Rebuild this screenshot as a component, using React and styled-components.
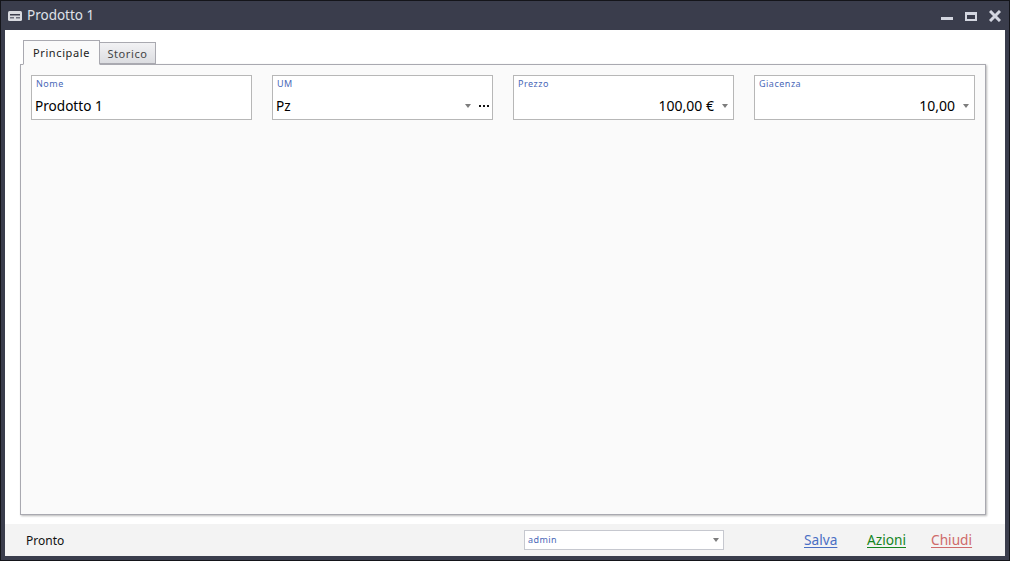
import React from "react";
import styled, { createGlobalStyle } from "styled-components";

const GlobalStyle = createGlobalStyle`
  html, body {
    margin: 0;
    padding: 0;
    background: #000;
  }
  body {
    font-family: "Noto Sans", "Open Sans", sans-serif;
  }
`;

const Win = styled.div`
  width: 1010px;
  height: 561px;
  box-sizing: border-box;
  display: flex;
  flex-direction: column;
  background: #3a3d4c;
  border: 1px solid #14151a;
  padding: 0 4px 4px 4px;
  overflow: hidden;
`;

const TitleBar = styled.div`
  height: 29px;
  flex: none;
  display: flex;
  align-items: center;
  color: #dfe1e8;
  font-size: 13.5px;
  padding-left: 3px;
`;

const TitleText = styled.span`
  margin-left: 5px;
  margin-top: -2px;
  flex: 1;
`;

const WinButtons = styled.div`
  display: flex;
  align-items: center;
  gap: 12px;
  margin-right: 4px;
  svg {
    display: block;
  }
`;

const Body = styled.div`
  flex: 1;
  min-height: 0;
  background: #fff;
  padding: 9px 19px 9px 15px;
  display: flex;
  flex-direction: column;
`;

const TabRow = styled.div`
  height: 25px;
  flex: none;
  display: flex;
  align-items: flex-end;
  padding-left: 3px;
  position: relative;
  z-index: 1;
`;

const Tab = styled.div`
  box-sizing: border-box;
  height: ${(p) => (p.$active ? 25 : 22)}px;
  width: ${(p) => p.$width}px;
  display: flex;
  align-items: center;
  justify-content: center;
  font-size: 11px;
  letter-spacing: 0.6px;
  color: ${(p) => (p.$active ? "#222" : "#444")};
  border: 1px solid #a9a9b0;
  border-left-width: ${(p) => (p.$active ? 1 : 0)}px;
  border-bottom: ${(p) => (p.$active ? "1px solid #fafafa" : "1px solid #a9a9b0")};
  margin-bottom: ${(p) => (p.$active ? -1 : 0)}px;
  background: ${(p) =>
    p.$active ? "#fafafa" : "linear-gradient(#f2f2f4, #dcdde1)"};
`;

const Panel = styled.div`
  flex: 1;
  min-height: 0;
  box-sizing: border-box;
  background: #fafafa;
  border: 1px solid #a9a9b0;
  box-shadow: 1px 1px 2px #b8b8b8;
  padding: 10px 10px;
  display: grid;
  grid-template-columns: repeat(4, 221px);
  justify-content: space-between;
  align-content: start;
`;

const Field = styled.div`
  box-sizing: border-box;
  height: 45px;
  background: #fff;
  border: 1px solid #b7b7b7;
  padding: 1px 2px 0 3px;
  display: flex;
  flex-direction: column;
`;

const Label = styled.div`
  font-size: 9px;
  line-height: 13px;
  height: 13px;
  margin-left: 1px;
  color: #4a68b8;
  letter-spacing: 0.5px;
`;

const ValueRow = styled.div`
  flex: 1;
  display: flex;
  align-items: center;
  justify-content: flex-end;
  font-size: 13.6px;
  color: #000;
  margin-top: 1px;
`;

const Value = styled.span`
  flex: ${(p) => (p.$right ? "none" : 1)};
  font-size: ${(p) => (p.$right ? 14 : 13.6)}px;
  margin-right: ${(p) => (p.$right ? 8 : 0)}px;
`;

const Arrow = styled.span`
  width: 0;
  height: 0;
  flex: none;
  border-left: 3.5px solid transparent;
  border-right: 3.5px solid transparent;
  border-top: 4px solid #7d7d7d;
  margin: ${(p) => p.$margin || "2px 3px 0 0"};
`;

const Dots = styled.span`
  display: flex;
  gap: 2px;
  margin: 2px 1px 0 8px;
  i {
    width: 2px;
    height: 2px;
    background: #111;
    display: block;
  }
`;

const Footer = styled.div`
  height: 32px;
  flex: none;
  background: #f3f3f3;
  display: flex;
  align-items: center;
  padding-left: 21px;
  font-size: 12px;
  color: #111;
`;

const Status = styled.span`
  width: 498px;
  flex: none;
`;

const UserSelect = styled.div`
  box-sizing: border-box;
  width: 200px;
  height: 20px;
  flex: none;
  margin-top: -1px;
  background: #fff;
  border: 1px solid #c6c8cf;
  display: flex;
  align-items: center;
  justify-content: space-between;
  padding: 0 4px 0 3px;
  font-size: 9px;
  letter-spacing: 0.4px;
  color: #4a68b8;
`;

const Actions = styled.div`
  display: grid;
  grid-template-columns: 63px 64px auto;
  margin-left: 80px;
  margin-top: -2px;
`;

const Action = styled.span`
  font-size: 13.7px;
  color: ${(p) => p.$color};
  text-decoration: underline;
  text-underline-offset: 2px;
`;

const fields = [
  { label: "Nome", value: "Prodotto 1" },
  { label: "UM", value: "Pz", combo: true },
  { label: "Prezzo", value: "100,00 €", right: true },
  { label: "Giacenza", value: "10,00", right: true },
];

function App() {
  return (
    <>
      <GlobalStyle />
      <Win>
        <TitleBar>
          <svg width="14" height="10" viewBox="0 0 14 10">
            <rect x="0" y="0" width="14" height="10" rx="1.5" fill="#d8dae0" />
            <rect x="2" y="3" width="10" height="1.5" fill="#3a3d4c" />
            <rect x="2" y="6" width="4" height="1.5" fill="#6b6e7c" />
            <rect x="8" y="6" width="4" height="1.5" fill="#6b6e7c" />
          </svg>
          <TitleText>Prodotto 1</TitleText>
          <WinButtons>
            <svg width="12" height="12" viewBox="0 0 12 12">
              <rect x="0" y="7" width="12" height="3" fill="#d3d6e0" />
            </svg>
            <svg width="12" height="12" viewBox="0 0 12 12">
              <path d="M0 2h12v9H0z M2 5v4h8V5z" fill="#d3d6e0" fillRule="evenodd" />
            </svg>
            <svg width="12" height="12" viewBox="0 0 12 12">
              <path d="M1 1l10 10M11 1L1 11" stroke="#d3d6e0" strokeWidth="3" />
            </svg>
          </WinButtons>
        </TitleBar>
        <Body>
          <TabRow>
            <Tab $active $width={77}>Principale</Tab>
            <Tab $width={56}>Storico</Tab>
          </TabRow>
          <Panel>
            {fields.map((f) => (
              <Field key={f.label}>
                <Label>{f.label}</Label>
                <ValueRow>
                  <Value $right={f.right}>{f.value}</Value>
                  {f.combo && <Arrow $margin="2px 0 0 0" />}
                  {f.combo && (
                    <Dots>
                      <i />
                      <i />
                      <i />
                    </Dots>
                  )}
                  {f.right && <Arrow $margin="2px 3px 0 0" />}
                </ValueRow>
              </Field>
            ))}
          </Panel>
        </Body>
        <Footer>
          <Status>Pronto</Status>
          <UserSelect>
            admin
            <Arrow $margin="1px 0 0 0" />
          </UserSelect>
          <Actions>
            <Action $color="#4a6fc4">Salva</Action>
            <Action $color="#16851f">Azioni</Action>
            <Action $color="#cf6a6a">Chiudi</Action>
          </Actions>
        </Footer>
      </Win>
    </>
  );
}

export default App;
